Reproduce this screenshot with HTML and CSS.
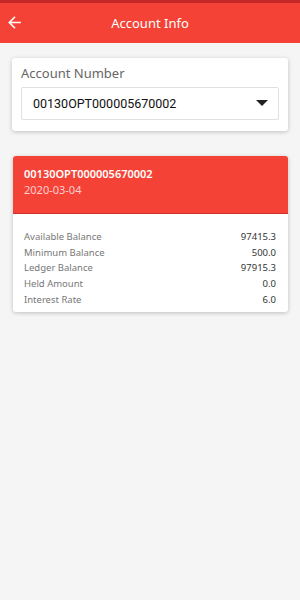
FILE: index.html
```html
<!DOCTYPE html>
<html lang="en">
<head>
  <meta charset="UTF-8">
  <title>Account Info</title>
  <link rel="stylesheet" href="styles.css">
</head>
<body>
  <div class="status"></div>
  <header class="appbar">
    <svg class="back" width="19" height="19" viewBox="0 0 24 24">
      <path d="M20 11H7.83l5.59-5.59L12 4l-8 8 8 8 1.41-1.41L7.83 13H20v-2z" fill="#fff"/>
    </svg>
    <div class="title">Account Info</div>
  </header>

  <div class="content">
    <div class="card picker">
      <div class="label">Account Number</div>
      <div class="select">
        <span>00130OPT000005670002</span>
        <svg width="12" height="7" viewBox="0 0 12 7"><path d="M0 0h12L6 6z" fill="#222"/></svg>
      </div>
    </div>

    <div class="card account">
      <div class="account-head">
        <div class="acc-no">00130OPT000005670002</div>
        <div class="acc-date">2020-03-04</div>
      </div>
      <div class="rows">
        <div class="row"><span>Available Balance</span><span class="val">97415.3</span></div>
        <div class="row"><span>Minimum Balance</span><span class="val">500.0</span></div>
        <div class="row"><span>Ledger Balance</span><span class="val">97915.3</span></div>
        <div class="row"><span>Held Amount</span><span class="val">0.0</span></div>
        <div class="row"><span>Interest Rate</span><span class="val">6.0</span></div>
      </div>
    </div>
  </div>
</body>
</html>
```

FILE: styles.css
```css
body {
  margin: 0;
  background: #f5f5f5;
  font-family: "Noto Sans", "Open Sans", sans-serif;
  width: 300px;
  height: 600px;
}
/* === top bars === */
.status {
  height: 3px;
  background: #c62828;
}
.appbar {
  height: 40px;
  background: #f44336;
  display: flex;
  align-items: center;
  justify-content: center;
  position: relative;
  color: #fff;
}
.appbar .back {
  position: absolute;
  left: 5px;
  top: 10px;
}
.appbar .title {
  font-size: 13px;
}
/* === cards === */
.content {
  padding: 15px 12px;
}
.card {
  background: #fff;
  border-radius: 3px;
  box-shadow: 0 1px 4px rgba(0, 0, 0, 0.22);
}
.picker {
  padding: 6px 9px 11px;
  margin-bottom: 25px;
}
.picker .label {
  font-size: 13px;
  color: #666;
  margin-bottom: 5px;
}
.select {
  height: 31px;
  border: 1px solid #e0e0e0;
  border-radius: 2px;
  display: flex;
  align-items: center;
  justify-content: space-between;
  padding: 0 10px 0 11px;
  font-family: Roboto, sans-serif;
  font-size: 12.5px;
  color: #111;
}
.account {
  margin-left: 1px;
  overflow: hidden;
}
.account-head {
  background: #f44336;
  height: 58px;
  padding: 10px 11px 0;
  box-sizing: border-box;
  color: #fff;
  border-bottom: 1px solid #d32f2f;
}
.acc-no {
  font-size: 11px;
  font-weight: 600;
}
.acc-date {
  font-size: 11px;
  color: #ffcdd2;
  margin-top: 1px;
}
.rows {
  padding: 16px 12px 4px 11px;
}
.row {
  display: flex;
  justify-content: space-between;
  font-size: 9.5px;
  color: #777;
  height: 15.7px;
}
.row .val {
  color: #333;
}
```
